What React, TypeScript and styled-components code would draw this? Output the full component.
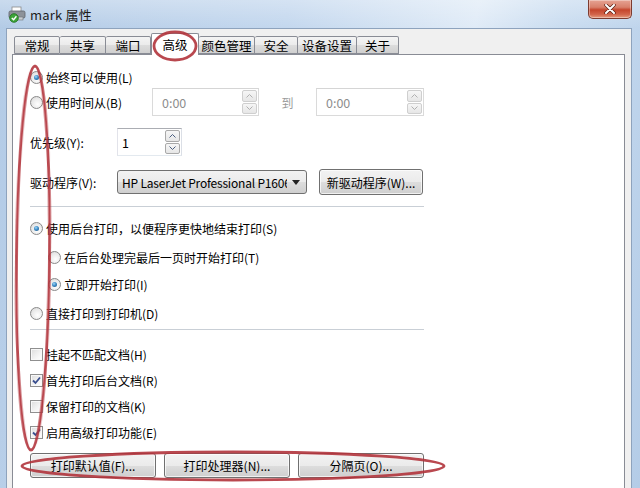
import React from 'react';
import styled, { createGlobalStyle } from 'styled-components';

const GlobalStyle = createGlobalStyle`
  html, body {
    margin: 0;
    padding: 0;
    background: #fff;
  }
  body {
    font-family: "Noto Sans CJK SC", "Noto Sans", sans-serif;
    font-size: 12px;
    color: #000;
  }
`;

const Window = styled.div`
  position: relative;
  width: 640px;
  height: 488px;
  overflow: hidden;
  display: flex;
  flex-direction: column;
  background:
    linear-gradient(180deg, rgba(255, 255, 255, 0.3), rgba(255, 255, 255, 0) 28px),
    linear-gradient(100deg, #b3cbe6 0%, #c3d7ee 40%, #e0ebf7 66%, #c9dcf0 78%, #b4cce7 100%);
`;

const TitleBar = styled.div`
  height: 28px;
  flex: none;
  display: flex;
  align-items: flex-start;
  padding-left: 7px;
`;

const TitleIcon = styled.svg`
  margin-top: 6px;
  flex: none;
`;

const TitleText = styled.span`
  margin-top: 5px;
  margin-left: 3px;
  font-size: 13px;
  color: #1b1b1b;
  letter-spacing: 0.2px;
`;

const CloseButton = styled.div`
  margin-left: auto;
  margin-right: 8px;
  width: 42px;
  height: 18px;
  display: flex;
  align-items: center;
  justify-content: center;
  border: 1px solid #7d3b30;
  border-top: none;
  border-radius: 0 0 5px 5px;
  background: linear-gradient(180deg, #e6a393 0%, #d8806b 40%, #c5452c 55%, #d2644a 80%, #e59c7e 100%);
  box-shadow: inset 0 0 0 1px rgba(255, 255, 255, 0.35);
`;

const Client = styled.div`
  flex: 1;
  display: flex;
  flex-direction: column;
  margin: 0 8px 0 6px;
  padding: 4px 6px 0 5px;
  background: #f0f0f0;
  border: 1px solid #8ea3bd;
  border-bottom: none;
  min-height: 0;
`;

const TabStrip = styled.div`
  height: 21px;
  flex: none;
  display: flex;
  align-items: flex-end;
  padding-left: 2px;
  position: relative;
  z-index: 2;
`;

const Tab = styled.div<{ $w: number; $active?: boolean }>`
  width: ${p => p.$w}px;
  height: ${p => (p.$active ? 22 : 18)}px;
  margin-bottom: ${p => (p.$active ? -1 : 0)}px;
  box-sizing: border-box;
  display: flex;
  align-items: center;
  justify-content: center;
  padding-top: ${p => (p.$active ? 0 : 1)}px;
  border: 1px solid #898c95;
  border-bottom: ${p => (p.$active ? 'none' : '1px solid #898c95')};
  border-left-width: ${p => (p.$active ? 1 : 0)}px;
  border-radius: 2px 2px 0 0;
  background: ${p =>
    p.$active
      ? '#fff'
      : 'linear-gradient(180deg, #f4f4f4 0%, #ebebeb 50%, #dddddd 51%, #d0d0d0 100%)'};
  font-size: 12.5px;
  &:first-child {
    border-left-width: 1px;
  }
`;

const Panel = styled.div`
  flex: 1;
  background: #fff;
  border: 1px solid #898c95;
  border-bottom: none;
  padding: 0 0 0 17px;
  min-height: 0;
`;

const Content = styled.div`
  width: 394px;
  display: flex;
  flex-direction: column;
`;

const Row = styled.div<{ $h: number; $mt: number; $indent?: number }>`
  height: ${p => p.$h}px;
  margin-top: ${p => p.$mt}px;
  padding-left: ${p => p.$indent ?? 0}px;
  display: flex;
  align-items: center;
  flex: none;
`;

const Field = styled.label<{ $w?: number }>`
  display: flex;
  align-items: center;
  gap: 3px;
  width: ${p => (p.$w ? `${p.$w}px` : 'auto')};
  flex: none;
  white-space: nowrap;
`;

const Label = styled.span<{ $dim?: boolean }>`
  color: ${p => (p.$dim ? '#9a9a9a' : '#000')};
  white-space: nowrap;
`;

const RadioDot = styled.span<{ $on?: boolean; $dim?: boolean }>`
  width: 11px;
  height: 11px;
  flex: none;
  border-radius: 50%;
  border: 1px solid ${p => (p.$dim ? '#c4c4c4' : '#8a8a8a')};
  background: ${p => (p.$dim ? '#f4f4f4' : 'radial-gradient(circle at 60% 65%, #ffffff 0%, #e8e8e8 60%, #cfcfcf 100%)')};
  display: flex;
  align-items: center;
  justify-content: center;
  &::after {
    content: '';
    display: ${p => (p.$on ? 'block' : 'none')};
    width: 5px;
    height: 5px;
    border-radius: 50%;
    background: radial-gradient(circle at 40% 35%, #9fd8f6 0%, #3f8cc8 45%, #1b4f7a 100%);
  }
`;

const CheckBox = styled.span`
  width: 11px;
  height: 11px;
  flex: none;
  border: 1px solid #8f8f8f;
  background: linear-gradient(135deg, #dcdcdc 0%, #f4f4f4 60%, #ffffff 100%);
  box-shadow: inset 0 0 0 1px #f8f8f8;
  display: flex;
  align-items: center;
  justify-content: center;
`;

const SpinBox = styled.div<{ $w: number; $dim?: boolean }>`
  width: ${p => p.$w}px;
  height: 28px;
  box-sizing: border-box;
  flex: none;
  display: flex;
  align-items: stretch;
  border: 1px solid ${p => (p.$dim ? '#d5d5d5' : '#abadb3')};
  border-left-color: ${p => (p.$dim ? '#dadada' : '#e2e3ea')};
  border-right-color: ${p => (p.$dim ? '#dadada' : '#dbdfe6')};
  border-bottom-color: ${p => (p.$dim ? '#dadada' : '#e3e9ef')};
  background: #fff;
`;

const SpinValue = styled.span<{ $dim?: boolean; $pad: number }>`
  flex: 1;
  display: flex;
  align-items: center;
  padding-left: ${p => p.$pad}px;
  color: ${p => (p.$dim ? '#8d8d8d' : '#000')};
  font-size: 12.5px;
`;

const SpinButtons = styled.div`
  width: 15px;
  display: flex;
  flex-direction: column;
  gap: 1px;
  padding: 1px 1px 1px 0;
`;

const SpinButton = styled.div<{ $dim?: boolean }>`
  flex: 1;
  border: 1px solid ${p => (p.$dim ? '#cfcfcf' : '#a9a9a9')};
  border-radius: 2px;
  background: linear-gradient(180deg, #f6f6f6 0%, #e6e6e6 100%);
  display: flex;
  align-items: center;
  justify-content: center;
`;

const ToWord = styled.span`
  width: 57px;
  flex: none;
  text-align: center;
  color: #9a9a9a;
`;

const Combo = styled.div`
  width: 190px;
  height: 24px;
  box-sizing: border-box;
  flex: none;
  display: flex;
  align-items: center;
  gap: 5px;
  border: 1px solid #707070;
  border-radius: 3px;
  background: linear-gradient(180deg, #f2f2f2 0%, #ebebeb 50%, #dddddd 51%, #cfcfcf 100%);
  padding: 0 6px 0 4px;
`;

const ComboText = styled.span`
  flex: 1;
  overflow: hidden;
  white-space: nowrap;
  font-size: 12px;
  letter-spacing: -0.2px;
`;

const Button = styled.div<{ $w?: number; $h: number; $ml?: number }>`
  width: ${p => (p.$w ? `${p.$w}px` : 'auto')};
  height: ${p => p.$h}px;
  margin-left: ${p => p.$ml ?? 0}px;
  box-sizing: border-box;
  display: flex;
  align-items: center;
  justify-content: center;
  border: 1px solid #707070;
  border-radius: 3px;
  background: linear-gradient(180deg, #f2f2f2 0%, #ebebeb 50%, #dddddd 51%, #cfcfcf 100%);
  box-shadow: inset 0 0 0 1px rgba(255, 255, 255, 0.7);
  white-space: nowrap;
`;

const Separator = styled.div<{ $mt: number }>`
  margin-top: ${p => p.$mt}px;
  height: 1px;
  background: #c9cfd6;
  flex: none;
`;

const ButtonBar = styled.div`
  margin-top: 10px;
  display: grid;
  grid-template-columns: repeat(3, 1fr);
  gap: 8px;
`;

const Annotations = styled.svg`
  position: absolute;
  left: 0;
  top: 0;
  pointer-events: none;
  z-index: 10;
`;

const Arrow = ({ up, dim }: { up?: boolean; dim?: boolean }) => (
  <svg width="7" height="4" viewBox="0 0 7 4">
    <polyline
      points={up ? '0.5,3.5 3.5,0.5 6.5,3.5' : '0.5,0.5 3.5,3.5 6.5,0.5'}
      fill="none"
      stroke={dim ? '#b0b0b0' : '#4c5f80'}
      strokeWidth="1"
    />
  </svg>
);

const Spinner = ({ w, value, dim, pad }: { w: number; value: string; dim?: boolean; pad: number }) => (
  <SpinBox $w={w} $dim={dim}>
    <SpinValue $dim={dim} $pad={pad}>{value}</SpinValue>
    <SpinButtons>
      <SpinButton $dim={dim}><Arrow up dim={dim} /></SpinButton>
      <SpinButton $dim={dim}><Arrow dim={dim} /></SpinButton>
    </SpinButtons>
  </SpinBox>
);

const Radio = ({ label, on }: { label: string; on?: boolean }) => (
  <Field>
    <RadioDot $on={on} />
    <Label>{label}</Label>
  </Field>
);

const Check = ({ label, on }: { label: string; on?: boolean }) => (
  <Field>
    <CheckBox>
      {on && (
        <svg width="9" height="9" viewBox="0 0 9 9">
          <path d="M1 4.5 L3.5 7 L8 1.5" fill="none" stroke="#3a4f8f" strokeWidth="1.8" />
        </svg>
      )}
    </CheckBox>
    <Label>{label}</Label>
  </Field>
);

const tabs = [
  { name: '常规', w: 46 },
  { name: '共享', w: 46 },
  { name: '端口', w: 45 },
  { name: '高级', w: 48, active: true },
  { name: '颜色管理', w: 56 },
  { name: '安全', w: 43 },
  { name: '设备设置', w: 59 },
  { name: '关于', w: 42 },
];

export default function App() {
  return (
    <>
      <GlobalStyle />
      <Window>
        <TitleBar>
          <TitleIcon width="20" height="17" viewBox="0 0 20 17">
            <rect x="5" y="1" width="9" height="5" fill="#fdfdfd" stroke="#8a8a8a" strokeWidth="0.8" />
            <rect x="2" y="5" width="16" height="7" rx="1.5" fill="#8d9299" stroke="#5e6369" strokeWidth="0.8" />
            <rect x="4" y="11" width="12" height="3" fill="#c9ccd0" stroke="#6d7278" strokeWidth="0.6" />
            <circle cx="7" cy="12" r="4.3" fill="#3ea63a" stroke="#1d6e1d" strokeWidth="0.8" />
            <path d="M4.8 12 L6.6 13.8 L9.4 10.2" fill="none" stroke="#fff" strokeWidth="1.4" />
          </TitleIcon>
          <TitleText>mark 属性</TitleText>
          <CloseButton>
            <svg width="12" height="10" viewBox="0 0 12 10">
              <path d="M2 1 L10 9 M10 1 L2 9" stroke="#5a1d12" strokeWidth="3.4" strokeLinecap="round" />
              <path d="M2 1 L10 9 M10 1 L2 9" stroke="#ffffff" strokeWidth="2" strokeLinecap="round" />
            </svg>
          </CloseButton>
        </TitleBar>

        <Client>
          <TabStrip>
            {tabs.map(t => (
              <Tab key={t.name} $w={t.w} $active={t.active}>
                {t.name}
              </Tab>
            ))}
          </TabStrip>

          <Panel>
            <Content>
              <Row $h={22} $mt={11}>
                <Radio label="始终可以使用(L)" on />
              </Row>
              <Row $h={28} $mt={0}>
                <Field $w={122}>
                  <RadioDot />
                  <Label>使用时间从(B)</Label>
                </Field>
                <Spinner w={107} value="0:00" dim pad={9} />
                <ToWord>到</ToWord>
                <Spinner w={108} value="0:00" dim pad={9} />
              </Row>
              <Row $h={28} $mt={12}>
                <Field $w={87}>
                  <Label>优先级(Y):</Label>
                </Field>
                <Spinner w={65} value="1" pad={4} />
              </Row>
              <Row $h={26} $mt={13}>
                <Field $w={87}>
                  <Label>驱动程序(V):</Label>
                </Field>
                <Combo>
                  <ComboText>HP LaserJet Professional P1606dn</ComboText>
                  <svg width="8" height="5" viewBox="0 0 8 5">
                    <path d="M0 0 L8 0 L4 5 Z" fill="#222" />
                  </svg>
                </Combo>
                <Button $w={104} $h={26} $ml={12}>新驱动程序(W)...</Button>
              </Row>

              <Separator $mt={11} />

              <Row $h={22} $mt={10}>
                <Radio label="使用后台打印，以便程序更快地结束打印(S)" on />
              </Row>
              <Row $h={22} $mt={7} $indent={18}>
                <Radio label="在后台处理完最后一页时开始打印(T)" />
              </Row>
              <Row $h={22} $mt={5} $indent={18}>
                <Radio label="立即开始打印(I)" on />
              </Row>
              <Row $h={22} $mt={7}>
                <Radio label="直接打印到打印机(D)" />
              </Row>

              <Separator $mt={5} />

              <Row $h={22} $mt={13}>
                <Check label="挂起不匹配文档(H)" />
              </Row>
              <Row $h={22} $mt={4}>
                <Check label="首先打印后台文档(R)" on />
              </Row>
              <Row $h={22} $mt={4}>
                <Check label="保留打印的文档(K)" />
              </Row>
              <Row $h={22} $mt={4}>
                <Check label="启用高级打印功能(E)" on />
              </Row>

              <ButtonBar>
                <Button $h={25}>打印默认值(F)...</Button>
                <Button $h={25}>打印处理器(N)...</Button>
                <Button $h={25}>分隔页(O)...</Button>
              </ButtonBar>
            </Content>
          </Panel>
        </Client>

        <Annotations width="640" height="488" viewBox="0 0 640 488">
          <g fill="none" stroke="#b2343c" strokeWidth="2.8" opacity="0.9">
            <ellipse cx="175" cy="46" rx="21" ry="14" />
            <ellipse cx="33" cy="258" rx="16.5" ry="192" transform="rotate(0.6 33 258)" />
            <ellipse cx="233" cy="466" rx="211" ry="14" />
          </g>
        </Annotations>
      </Window>
    </>
  );
}
